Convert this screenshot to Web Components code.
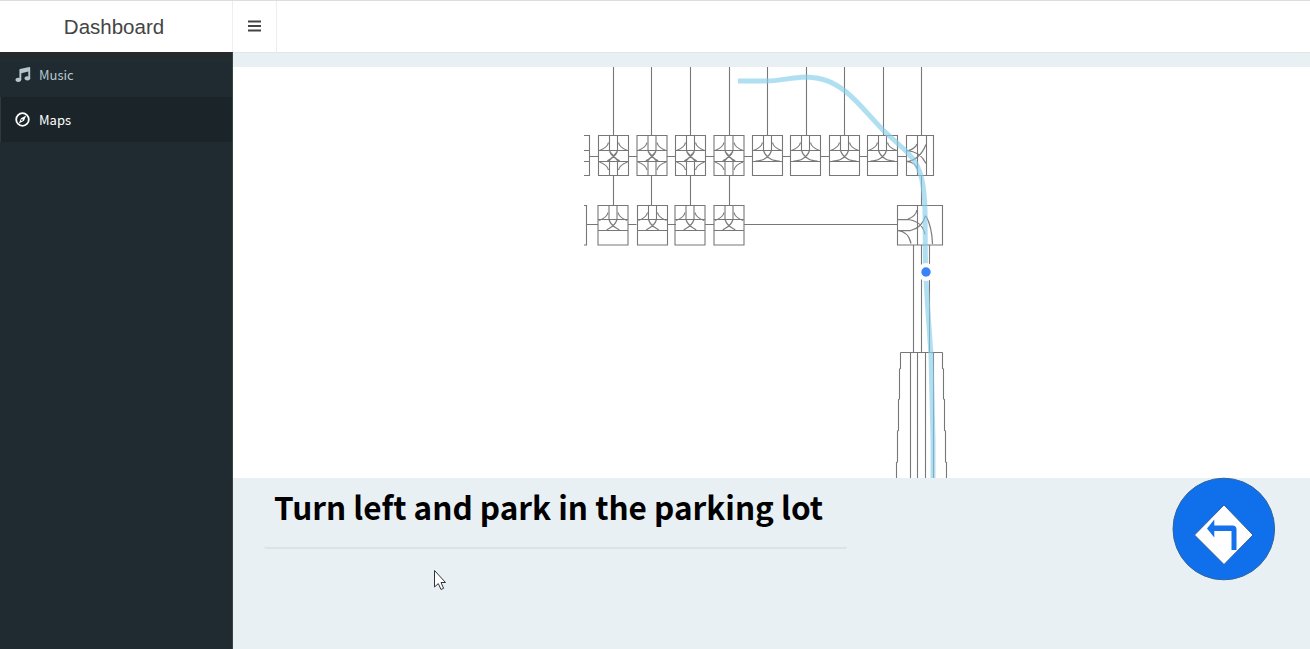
<!DOCTYPE html>
<html lang="en">
<head>
<meta charset="utf-8">
<title>Dashboard</title>
<style>
html,body{margin:0;height:100%;overflow:hidden}
body{font-family:"Noto Sans CJK SC","Noto Sans",sans-serif;font-size:14px}
</style>
</head>
<body>
<dash-app></dash-app>
<script>
function define(name, html, setup) {
  customElements.define(name, class extends HTMLElement {
    constructor() {
      super();
      this.attachShadow({mode: 'open'}).innerHTML = html;
      if (setup) setup(this.shadowRoot, this);
    }
  });
}

define('dash-header', `<style>
:host{display:flex;box-sizing:border-box;height:52px;border-top:1px solid #ddd;background:#fff;color:#444}
.brand{box-sizing:border-box;width:233px;border-right:1px solid #eee;padding-right:4px;display:flex;align-items:center;justify-content:center;font:20.5px "Liberation Sans",Arial,sans-serif}
.toggle{box-sizing:border-box;width:44px;border-right:1px solid #eee;display:flex;align-items:center;justify-content:center}
svg{display:block;margin-top:-1px}
</style>
<div class="brand"><span>Dashboard</span></div>
<div class="toggle"><svg width="13" height="12" viewBox="0 0 13 12"><path d="M0 1.500h13M0 6h13M0 10.500h13" stroke="#444" stroke-width="1.9"/></svg></div>`);

define('nav-item', `<style>
:host{display:flex;align-items:center;box-sizing:border-box;height:45px;padding-left:12px;border-left:3px solid transparent;color:#b8c7ce;font-size:13px;line-height:20px}
:host([active]){color:#fff;background:#1b2529;border-left:1px solid #32393c;padding-left:14px}
.i{width:16px;height:16px;margin-right:8px}
</style><span class="i"><slot name="icon"></slot></span><span><slot></slot></span>`);

define('dash-sidebar', `<style>
:host{display:block;width:233px;box-sizing:border-box;background:linear-gradient(#26292a,#222d32 9px,#1f2b30 12px);border-right:1px solid #394347}
svg{display:block}
</style>
<nav><nav-item><svg slot="icon" width="16" height="16" viewBox="0 0 16 16"><path d="M4.400 2.800Q4.400 2.200 5 2L14.200 .1Q15.200 0 15.200 .900V11.500H13.300V4.400L6.300 6.300V12.900H4.400z" fill="#b8c7ce"/><ellipse cx="3.300" cy="12.800" rx="2.800" ry="2.100" fill="#b8c7ce"/><ellipse cx="12.400" cy="11.300" rx="2.800" ry="2.100" fill="#b8c7ce"/></svg>Music</nav-item>
<nav-item active><svg slot="icon" width="16" height="16" viewBox="0 0 16 16"><circle cx="7.500" cy="7.500" r="6.300" fill="none" stroke="#fff" stroke-width="1.800"/><path fill-rule="evenodd" d="M11.200 3.500 9 8.700 3.800 11.500 6 6.300zM6.700 7 5.900 9.200 8.200 8z" fill="#fff"/></svg>Maps</nav-item></nav>`);

define('road-map', `<style>
:host{display:block;height:411px;background:#fff}
svg{display:block;width:1077px;height:411px}
.road{fill:none;stroke:#777;stroke-width:1.1}
.turn{fill:none;stroke:#7c7c7c;stroke-width:1.25}
.route{fill:none;stroke:#87ceeb;stroke-opacity:.65;stroke-width:5}
</style>
<svg viewBox="233 67 1077 411"><path class="turn"/><path class="road"/>
<path class="route" d="M738 81H766C780 81 790 77.500 806 77C824 77.500 834 83 845 91C860 103 868 115 883 130L907 152C916 161 920 169 922 180Q924.500 192 925 210L925.500 270L927.500 305L931 355L933 440V478"/>
<circle cx="926" cy="272" r="9" fill="#fff"/><circle cx="926" cy="272" r="4.700" fill="#3b82f6"/></svg>`,
root => {
  const centres = [613.5, 652, 690.5, 729, 767.5, 805.5, 844.5, 882.5];
  const verticals = [613.5, 651.5, 690.5, 729.5, 767.5, 806.5, 844.5, 883.5];
  let d = '', t = '';
  // Lane dividers and curved lane connections in the upper half of a junction.
  const upper = (c, y, h, low, reach) => {
    d += `M${c-4} ${y}v${h}M${c+4} ${y}v${h}M${c-15} ${y+h}h30M${c-15} ${y+low}h30`;
    t += `M${c-5} ${y+7}q-1 5-9 8M${c+5} ${y+7}q1 5 9 8` +
      `M${c-4} ${y+h}c1 3 4 7 8 9q2 1 ${reach} 1.500M${c+4} ${y+h}c-1 3-4 7-8 9q-2 1-${reach} 1.500`;
  };
  centres.forEach((c, i) => {
    d += `M${verticals[i]} 67V135.500M${c-15} 135.500h30v40h-30z`;
    upper(c, 135.5, 15, 26, i < 4 ? 2 : 8);
    d += `M${c+15} 156.500h8.500`;
    if (i < 4) {
      d += `M${c-4} 161.500v14M${c+4} 161.500v14`;
      t += `M${c-5} 170q-1-5-9-8M${c+5} 170q1-5 9-8M${c-5} 161.500l9-10M${c+5} 161.500l-9-10M${c-3} 153.500l6 5.500M${c+3} 153.500l-6 5.500`;
      const b = Math.floor(c) + (i === 1 ? -.5 : 0) + (i === 1 ? .5 : -.5) + .500;
      d += `M${verticals[i]} 175.500v30M${b-15} 205.500h30v39.500h-30zM${b+15} 224.500h${i === 3 ? 154 : 8.5}`;
      upper(b, 205.5, 14, 25, 2);
    }
  });
  d += 'M584 135.500h5.500v40h-5.500M584 150.500h5.500M584 161.500h5.500M589 156.500h9.500M584 205.500h2.500v39.500h-2.500M587 224.500h11';
  // Eastern junctions.
  d += 'M921.500 67V135.500M906.500 135.500h27v40h-27zM917.500 135.500v40M926.500 135.500v40M921.500 175.500v30';
  t += 'M917 144q-2 5-10 7M906.500 150.500q14 1 19.500 13M906.500 161.500q13-1 19.500-17M906.500 161.500q9 1 10.500 7';
  d += 'M897.500 205.500h45v39.500h-45zM917.500 205.500v39';
  t += 'M917 210q-1 6-9 9M897.500 219.500h11q14 2 16.500 15M897.500 230.500h13q12-3 15-15M897.500 230.500q11 1 13.500 13M926 216q6 11 6.500 28';
  // The approach road and its widening lanes.
  d += 'M913.500 245V352.500M921.500 245V352.500M929.500 245V352.500M900.500 352.500h42M900.500 352.500v16l-1 .5v30l-1 .5v31l-1 .5v31l-1 .5v16M942.500 352.500v16l1 .5v30l1 .5v31l1 .5v31l1 .5v16M910.500 352.500V478M917.500 352.500V478M925.500 352.500V478M933.500 352.500V478';
  root.querySelector('.road').setAttribute('d', d);
  root.querySelector('.turn').setAttribute('d', t);
});

define('direction-bar', `<style>
:host{display:flex;justify-content:space-between;height:171px;padding:0 35px 0 31px}
.box{box-sizing:border-box;width:583px;height:71px;padding:4px 10px 0;border-bottom:2px solid #dce2e5;border-radius:3px}
h1{margin:0;font-size:31.53px;line-height:48px;font-weight:700;color:#000;white-space:nowrap}
svg{display:block;width:103px;height:104px;margin-top:-1px}
</style>
<div class="box"><h1><slot></slot></h1></div>
<svg viewBox="0 0 103 104"><circle cx="51.800" cy="52" r="50.800" fill="#1070eb" stroke="#31669f"/><path d="M52 28 81 58 52 87.500 22.500 58z" fill="#fff" stroke="#315f96"/><path d="M35 51.500 42.300 42.500V48.500H60.500Q64.500 48.500 64.500 52.500V73H59.500V54H42.300V60.500z" fill="#1473ec"/></svg>`);

define('mouse-pointer', `<style>:host{display:block;position:absolute;left:433px;top:569px;width:14px;height:22px}svg{display:block}</style>
<svg width="14" height="22" viewBox="0 0 14 22"><path d="M1.500 1.500V18L5.300 14.600 8 20.500 10.600 19.300 8 13.500H12.500z" fill="#fff" stroke="#303438"/></svg>`);

define('dash-app', `<style>
:host{display:grid;grid-template:52px 597px / 233px 1077px;height:649px;width:1310px}
dash-header{grid-column:1/3}
main{box-sizing:border-box;border-top:1px solid #e2e5e7;padding-top:14px;background:#e9f0f3}
</style><dash-header></dash-header><dash-sidebar></dash-sidebar>
<main><road-map></road-map><direction-bar>Turn left and park in the parking lot</direction-bar></main><mouse-pointer></mouse-pointer>`);
</script>
</body>
</html>
